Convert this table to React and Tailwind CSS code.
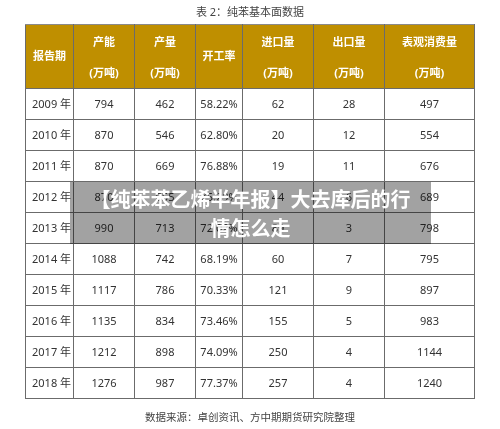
const rows = [
  ['2009 年', '794', '462', '58.22%', '62', '28', '497'],
  ['2010 年', '870', '546', '62.80%', '20', '12', '554'],
  ['2011 年', '870', '669', '76.88%', '19', '11', '676'],
  ['2012 年', '870', '655', '75.29%', '44', '6', '689'],
  ['2013 年', '990', '713', '72.02%', '89', '3', '798'],
  ['2014 年', '1088', '742', '68.19%', '60', '7', '795'],
  ['2015 年', '1117', '786', '70.33%', '121', '9', '897'],
  ['2016 年', '1135', '834', '73.46%', '155', '5', '983'],
  ['2017 年', '1212', '898', '74.09%', '250', '4', '1144'],
  ['2018 年', '1276', '987', '77.37%', '257', '4', '1240'],
];

const heads = [
  { top: '报告期', w: 'w-[48px]' },
  { top: '产能', sub: '(万吨)', w: 'w-[61px]' },
  { top: '产量', sub: '(万吨)', w: 'w-[61px]' },
  { top: '开工率', w: 'w-[47px]' },
  { top: '进口量', sub: '(万吨)', w: 'w-[71px]' },
  { top: '出口量', sub: '(万吨)', w: 'w-[71px]' },
  { top: '表观消费量', sub: '(万吨)', w: 'w-[90px]' },
];

// lighter rules on the right-hand columns
const lineColor = (i) => (i === 5 || i === 6 ? 'border-l-[#b4b4b4]' : 'border-l-[#6b6b6b]');

export default function App() {
  return (
    <div className="relative w-[500px] h-[429px] bg-white font-['Noto_Sans','Noto_Sans_CJK_SC',sans-serif] text-[#333]">
      <div className="h-[24px] flex items-center justify-center text-[11px] text-[#444]">
        表 2：纯苯基本面数据
      </div>

      <table className="ml-[25px] w-[449px] border-collapse table-fixed">
        <thead>
          <tr className="h-[64px] bg-[#bf8f00] text-white font-bold text-[11px]">
            {heads.map((h, i) => (
              <th
                key={h.top}
                className={`${h.w} p-0 border border-[#6b6b6b] border-t-[#8a8a8a] ${lineColor(i)} align-middle`}
              >
                {h.sub ? (
                  <div className="flex flex-col items-center leading-[31px]">
                    <span>{h.top}</span>
                    <span>{h.sub}</span>
                  </div>
                ) : (
                  <span>{h.top}</span>
                )}
              </th>
            ))}
          </tr>
        </thead>
        <tbody>
          {rows.map((r) => (
            <tr key={r[0]} className="h-[31px] text-[11px]">
              {r.map((c, i) => (
                <td
                  key={i}
                  className={`p-0 border border-[#6b6b6b] ${lineColor(i)} ${i === 0 ? 'text-left pl-[6px]' : 'text-center'}`}
                >
                  {c}
                </td>
              ))}
            </tr>
          ))}
        </tbody>
      </table>

      <div className="mt-[11px] text-center text-[10.5px] text-[#444]">
        数据来源：卓创资讯、方中期期货研究院整理
      </div>

      {/* banner: multiplied grey so the table shows through dark */}
      <div className="absolute left-[70px] top-[182px] w-[361px] h-[62px] bg-[#a2a2a2] mix-blend-multiply" />
      <div className="absolute left-[70px] top-[182px] w-[361px] h-[62px] flex flex-col items-center justify-center text-white font-bold text-[20px] leading-[29px] font-['Noto_Sans_CJK_SC',sans-serif]">
        <span>【纯苯苯乙烯半年报】大去库后的行</span>
        <span>情怎么走</span>
      </div>
    </div>
  );
}
